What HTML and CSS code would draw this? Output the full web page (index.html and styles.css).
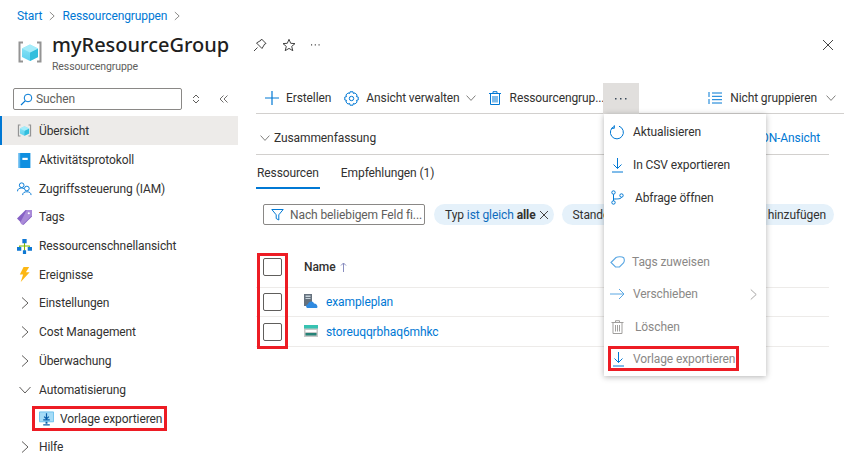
FILE: index.html
```html
<!DOCTYPE html>
<html lang="de">
<head>
  <meta charset="UTF-8">
  <title>myResourceGroup</title>
  <link rel="stylesheet" href="styles.css">
</head>
<body>
  <svg class="defs" width="0" height="0">
    <defs>
      <linearGradient id="cubeTop" x1="0" y1="0" x2="0" y2="1">
        <stop offset="0" stop-color="#8fe6f7"/><stop offset="1" stop-color="#5ed0ee"/>
      </linearGradient>
      <symbol id="rg" viewBox="0 0 26 24">
        <path d="M6 2.500H2.500V21.500H6" fill="none" stroke="#949494" stroke-width="2"/>
        <path d="M20 2.500H23.500V21.500H20" fill="none" stroke="#949494" stroke-width="2"/>
        <path d="M13 4.500L21 8.500V17L13 21L5 17V8.500Z" fill="url(#cubeTop)"/>
        <path d="M13 12.500L21 8.500V17L13 21Z" fill="#32bedd"/>
        <path d="M13 12.500L5 8.500L13 4.500L21 8.500Z" fill="#a5ecfa"/>
      </symbol>
      <symbol id="chev-right" viewBox="0 0 10 14">
        <path d="M2 1.500L8 7L2 12.500" fill="none" stroke="#605e5c" stroke-width="1"/>
      </symbol>
      <symbol id="chev-down" viewBox="0 0 14 10">
        <path d="M1.500 2L7 8L12.500 2" fill="none" stroke="#605e5c" stroke-width="1"/>
      </symbol>
      <symbol id="trash" viewBox="0 0 12 14">
        <path d="M1.500 3V13.500H10.500V3M0 2.500H12M4 2.500V.7H8V2.500M4 5V11.500M6 5V11.500M8 5V11.500" fill="none" stroke="currentColor" stroke-width="1"/>
      </symbol>
      <symbol id="down" viewBox="0 0 14 16">
        <path d="M7 1V11.500M3 7.500L7 11.500L11 7.500M1.500 15H12.500" fill="none" stroke="#0078d4" stroke-width="1"/>
      </symbol>
      <symbol id="dots" viewBox="0 0 12 2">
        <path d="M0 0H1.500V1.500H0ZM5 0H6.500V1.500H5ZM10 0H11.500V1.500H10Z" fill="currentColor"/>
      </symbol>
    </defs>
  </svg>

  <nav class="crumbs">
    <a>Start</a>
    <svg class="crumb-sep"><use href="#chev-right"/></svg>
    <a>Ressourcengruppen</a>
    <svg class="crumb-sep"><use href="#chev-right"/></svg>
  </nav>

  <header class="head">
    <svg class="head-icon"><use href="#rg"/></svg>
    <div class="head-text">
      <h1>myResourceGroup</h1>
      <div class="head-sub">Ressourcengruppe</div>
    </div>
    <div class="head-actions">
      <svg width="14" height="14" viewBox="0 0 14 14"><path d="M1 13L4.500 9.500M8.500 1L13 5.500L11.700 6L9 10.500L3.500 5L8 2.300Z" fill="none" stroke="#444" stroke-width="1"/></svg>
      <svg width="14" height="14" viewBox="0 0 14 14"><path d="M7 1.300L8.700 5.300L13 5.600L9.700 8.400L10.800 12.700L7 10.400L3.200 12.700L4.300 8.400L1 5.600L5.300 5.300Z" fill="none" stroke="#444" stroke-width="1"/></svg>
      <svg class="head-dots"><use href="#dots"/></svg>
    </div>
    <svg class="head-close" width="12" height="12" viewBox="0 0 12 12"><path d="M1 1L11 11M11 1L1 11" stroke="#444" stroke-width="1"/></svg>
  </header>

  <div class="page">
    <aside class="side">
      <div class="side-tools">
        <div class="search">
          <svg width="13" height="13" viewBox="0 0 13 13"><circle cx="8" cy="5" r="3.800" fill="none" stroke="#0078d4"/><path d="M5.200 7.800L1 12" stroke="#0078d4" stroke-width="1.200"/></svg>
          <span>Suchen</span>
        </div>
        <svg class="sort" width="8" height="10" viewBox="0 0 8 10"><path d="M1 4L4 1L7 4M1 6L4 9L7 6" fill="none" stroke="#605e5c"/></svg>
        <svg class="collapse" width="9" height="8" viewBox="0 0 9 8"><path d="M4.500 .5L1 4L4.500 7.500M8.500 .5L5 4L8.500 7.500" fill="none" stroke="#605e5c" stroke-width=".9"/></svg>
      </div>
      <ul class="nav">
        <li class="nav-item selected">
          <svg class="nav-icon"><use href="#rg"/></svg>Übersicht
        </li>
        <li class="nav-item">
          <svg class="nav-icon" viewBox="0 0 14 14"><path d="M1.500 0H12.500V14H1.500Z" fill="#0f8fe0"/><path d="M1.500 0H3V14H1.500Z" fill="#5fb8f0"/><path d="M5 4.500H10V6.500H5Z" fill="#fff"/></svg>Aktivitätsprotokoll
        </li>
        <li class="nav-item">
          <svg class="nav-icon" viewBox="0 0 16 14"><circle cx="5" cy="3.500" r="2.500" fill="none" stroke="#0078d4"/><path d="M.5 10C.5 7.500 2.500 6.500 5 6.500C6 6.500 7 6.700 7.500 7.200" fill="none" stroke="#0078d4"/><circle cx="10.500" cy="7" r="2.500" fill="none" stroke="#0078d4"/><path d="M6 14C6 11.500 8 10.500 10.500 10.500C13 10.500 15 11.500 15 14" fill="none" stroke="#0078d4"/></svg>Zugriffssteuerung (IAM)
        </li>
        <li class="nav-item">
          <svg class="nav-icon" viewBox="0 0 14 14"><path d="M8 0H14V6L6 14L0 8Z" fill="#8661c5"/><path d="M9 0H14V5L5 14L3 12Z" fill="#a98ad8"/><circle cx="11" cy="3" r="1" fill="#fff"/></svg>Tags
        </li>
        <li class="nav-item">
          <svg class="nav-icon" viewBox="0 0 14 14"><path d="M7 3V11M2.500 8V6.500H11.500V8" fill="none" stroke="#7fba00"/><path d="M5 0H9V4H5ZM0 7.500H4V11H0ZM10 7.500H14V11H10ZM5.500 10.500H8.500V14H5.500Z" fill="#0f78d4"/></svg>Ressourcenschnellansicht
        </li>
        <li class="nav-item">
          <svg class="nav-icon" viewBox="0 0 14 16"><path d="M6 0H12L8.500 5.500H12.500L3 16L5.500 8H2Z" fill="#fcb714"/></svg>Ereignisse
        </li>
        <li class="nav-item"><svg class="nav-chev"><use href="#chev-right"/></svg>Einstellungen</li>
        <li class="nav-item"><svg class="nav-chev"><use href="#chev-right"/></svg>Cost Management</li>
        <li class="nav-item"><svg class="nav-chev"><use href="#chev-right"/></svg>Überwachung</li>
        <li class="nav-item"><svg class="nav-chev-down"><use href="#chev-down"/></svg>Automatisierung</li>
        <li class="nav-item nav-child">
          <div class="nav-mark">
            <svg class="nav-icon" viewBox="0 0 16 15"><path d="M.5 .5H15.500V11H.5Z" fill="#a5dcf7" stroke="#6cc0ec"/><path d="M8 2V7.500M5.500 5.500L8 8L10.500 5.500M4.500 9H11.500" fill="none" stroke="#0a5ea8" stroke-width="1.300"/><path d="M7 11H9V13H7ZM4.500 13.500H11.500V15H4.500Z" fill="#0a5ea8"/></svg>Vorlage exportieren
          </div>
        </li>
        <li class="nav-item"><svg class="nav-chev"><use href="#chev-right"/></svg>Hilfe</li>
      </ul>
    </aside>

    <main class="main">
      <div class="cmdbar">
        <div class="cmd cmd-new">
          <svg width="14" height="14" viewBox="0 0 14 14"><path d="M7 0V14M0 7H14" stroke="#0078d4" stroke-width="1.200"/></svg>Erstellen
        </div>
        <div class="cmd cmd-view">
          <svg width="15" height="15" viewBox="0 0 15 15"><circle cx="7.500" cy="7.500" r="2.200" fill="none" stroke="#0078d4"/><path d="M6 .8H9L9.400 2.500L11 1.900L13.100 4L12.400 5.600L14.200 6V9L12.400 9.400L13.100 11L11 13.100L9.400 12.400L9 14.200H6L5.600 12.400L4 13.100L1.900 11L2.600 9.400L.8 9V6L2.600 5.600L1.900 4L4 1.900L5.600 2.500Z" fill="none" stroke="#0078d4"/></svg>Ansicht verwalten
          <svg class="cmd-chev"><use href="#chev-down"/></svg>
        </div>
        <div class="cmd cmd-del">
          <svg class="icon-trash"><use href="#trash"/></svg>Ressourcengrup...
        </div>
        <div class="cmd-more"><svg class="more-dots"><use href="#dots"/></svg></div>
        <div class="cmd cmd-group">
          <svg width="14" height="12" viewBox="0 0 14 12"><path d="M4 1H14M4 4.300H14M4 7.700H14M4 11H14M1 0V5M1 7V12" stroke="#0078d4" stroke-width="1"/></svg>Nicht gruppieren
          <svg class="cmd-chev"><use href="#chev-down"/></svg>
        </div>
      </div>

      <div class="content">
        <div class="summary">
          <svg class="summary-chev"><use href="#chev-down"/></svg>
          <span>Zusammenfassung</span>
          <a class="json">JSON-Ansicht</a>
        </div>

        <div class="tabs">
          <span class="tab active">Ressourcen</span>
          <span class="tab">Empfehlungen (1)</span>
        </div>

        <div class="filters">
          <div class="filter-input">
            <svg width="13" height="13" viewBox="0 0 13 13"><path d="M.8 1.500H12.200L7.800 6.800V12L5.200 10.500V6.800Z" fill="none" stroke="#0078d4"/></svg>
            <span>Nach beliebigem Feld fi...</span>
          </div>
          <div class="chip">Typ <em>ist gleich</em> <b>alle</b>
            <svg width="10" height="10" viewBox="0 0 10 10"><path d="M1 1L9 9M9 1L1 9" stroke="#444"/></svg>
          </div>
          <div class="chip chip-wide">Standort</div>
          <div class="chip chip-add">hinzufügen</div>
        </div>

        <div class="table">
          <div class="table-mark"></div>
          <div class="row row-head">
            <span class="check"></span>
            <span class="col-name">Name</span>
            <svg class="sort-up" width="7" height="10" viewBox="0 0 7 10"><path d="M3.500 10V1M1 3.500L3.500 1L6 3.500" fill="none" stroke="#8a8ec0"/></svg>
          </div>
          <div class="row row-one">
            <span class="check"></span>
            <svg class="res-icon" viewBox="0 0 14 14"><path d="M0 0H8V12H0Z" fill="#66727e"/><path d="M1.500 1.500H6.500V3H1.500ZM1.500 4H6.500V5H1.500Z" fill="#c8d4dc"/><path d="M4 14C1.500 14 1.500 10.500 4 10.300C4.500 7 9 6.500 10 9.500C13 9.300 15 14 12 14Z" fill="#2f8ae0"/></svg>
            <a>exampleplan</a>
          </div>
          <div class="row row-two">
            <span class="check"></span>
            <svg class="res-icon" viewBox="0 0 14 12"><path d="M0 0H14V12H0Z" fill="#c8c8c8"/><path d="M0 0H14V3.500H0Z" fill="#37c2b1"/><path d="M1.500 5H12.500V7H1.500Z" fill="#fff"/><path d="M1.500 8H12.500V10.500H1.500Z" fill="#258277"/></svg>
            <a>storeuqqrbhaq6mhkc</a>
          </div>
        </div>
      </div>
    </main>
  </div>

  <div class="menu">
    <div class="menu-item">
      <svg width="15" height="15" viewBox="0 0 15 15"><path d="M4.500 1.300A6.500 6.500 0 1 0 9 1.200M4.300 .3V3.300H1.500" fill="none" stroke="#0078d4"/></svg>
      <span>Aktualisieren</span>
    </div>
    <div class="menu-item">
      <svg class="icon-down"><use href="#down"/></svg>
      <span>In CSV exportieren</span>
    </div>
    <div class="menu-item item-wide">
      <svg width="13" height="15" viewBox="0 0 13 15"><circle cx="2.500" cy="2.500" r="1.700" fill="none" stroke="#0078d4"/><circle cx="2.500" cy="12.500" r="1.700" fill="none" stroke="#0078d4"/><circle cx="10.500" cy="5.500" r="1.700" fill="none" stroke="#0078d4"/><path d="M2.500 4.200V10.800M2.500 9C6 9 10.500 9 10.500 7.200" fill="none" stroke="#0078d4"/></svg>
      <span>Abfrage öffnen</span>
    </div>
    <div class="menu-gap"></div>
    <div class="menu-item off item-tag">
      <svg width="15" height="12" viewBox="0 0 15 12"><path d="M1 6.500L6 1.500C8 .5 12 .5 13.700 1.800C14.500 3.500 14.500 5.500 13.500 7L9.500 11H5.500Z" fill="none" stroke="#5aa7e3" stroke-width="1.100"/></svg>
      <span>Tags zuweisen</span>
    </div>
    <div class="menu-item off">
      <svg width="15" height="12" viewBox="0 0 15 12"><path d="M0 6H14M9 1L14 6L9 11" fill="none" stroke="#5aa7e3"/></svg>
      <span>Verschieben</span>
      <svg class="menu-chev"><use href="#chev-right"/></svg>
    </div>
    <div class="menu-item off item-wide">
      <svg class="icon-trash-off"><use href="#trash"/></svg>
      <span>Löschen</span>
    </div>
    <div class="menu-item off menu-mark">
      <svg class="icon-down"><use href="#down"/></svg>
      <span>Vorlage exportieren</span>
    </div>
  </div>
</body>
</html>
```

FILE: styles.css
```css
* {
  box-sizing: border-box;
}
html, body {
  margin: 0;
  height: 459px;
  overflow: hidden;
}
body {
  position: relative;
  background: #fff;
  color: #323130;
  font-family: Roboto, "Noto Sans", sans-serif;
  font-size: 12px;
  letter-spacing: -0.1px;
}
a {
  color: #0078d4;
  text-decoration: none;
}
em {
  font-style: normal;
  color: #0f6cbd;
}
.defs {
  position: absolute;
}

/* breadcrumb + title */
.crumbs {
  display: flex;
  align-items: center;
  height: 31px;
  padding-left: 17px;
  gap: 6px;
}
.crumb-sep {
  width: 8px;
  height: 10px;
}
.head {
  display: flex;
  align-items: flex-start;
  height: 52px;
  padding-left: 17px;
}
.head-icon {
  width: 26px;
  height: 24px;
  margin-top: 9px;
}
.head-text {
  margin-left: 9px;
  width: 200px;
}
h1 {
  margin: 0;
  font-family: "Noto Sans", sans-serif;
  font-size: 20px;
  font-weight: 500;
  line-height: 28px;
  letter-spacing: 0;
  color: #1f1f1f;
}
.head-sub {
  margin-top: 1px;
  font-size: 10.500px;
  line-height: 14px;
  color: #605e5c;
}
.head-actions {
  display: flex;
  align-items: center;
  gap: 15px;
  height: 28px;
  margin-left: 1px;
}
.head-dots {
  width: 9px;
  height: 2px;
  color: #444;
}
.head-close {
  margin: 8px 10px 0 auto;
}

.page {
  display: flex;
  height: 376px;
}

/* left menu */
.side {
  width: 238px;
  flex: none;
}
.side-tools {
  display: flex;
  align-items: center;
  height: 33px;
  padding: 5px 0 6px 13px;
}
.search {
  display: flex;
  align-items: center;
  gap: 3px;
  width: 169px;
  height: 22px;
  padding-left: 6px;
  border: 1px solid #8a8886;
  border-radius: 2px;
  color: #605e5c;
}
.sort {
  margin-left: 10px;
}
.collapse {
  margin-left: 19px;
}
.nav {
  list-style: none;
  margin: 0;
  padding: 0;
}
.nav-item {
  display: flex;
  align-items: center;
  height: 28.700px;
  padding: 2px 0 0 17px;
  white-space: nowrap;
}
.nav-item.selected {
  background: #edebe9;
  border-left: 2px solid #0078d4;
  padding: 1px 0 0 15px;
}
.nav-icon {
  width: 15px;
  height: 15px;
  margin-right: 7px;
  flex: none;
}
.nav-chev {
  width: 10px;
  height: 14px;
  margin: 0 9px 0 3px;
}
.nav-chev-down {
  width: 14px;
  height: 10px;
  margin: 0 7px 0 1px;
}
.nav-child {
  padding: 3px 0 0 32px;
}
.nav-mark {
  display: flex;
  align-items: center;
  width: 135px;
  height: 25px;
  padding-left: 4px;
  border: 3px solid #ed1c24;
  white-space: nowrap;
}
.nav-mark .nav-icon {
  margin-right: 6px;
}

/* right side */
.main {
  flex: 1;
  margin-left: 18px;
  min-width: 0;
}
.cmdbar {
  display: flex;
  align-items: center;
  height: 31px;
  border-bottom: 1px solid #d2d0ce;
}
.cmd {
  display: flex;
  align-items: center;
  white-space: nowrap;
}
.cmd-new {
  gap: 7px;
  margin-left: 9px;
}
.cmd-view {
  gap: 7px;
  margin-left: 13px;
}
.cmd-view .cmd-chev {
  margin-left: -2px;
}
.cmd-del {
  gap: 9px;
  margin-left: 12px;
}
.cmd-chev {
  width: 12px;
  height: 8px;
}
.icon-trash {
  width: 12px;
  height: 14px;
  color: #0078d4;
}
.cmd-more {
  display: flex;
  align-items: center;
  justify-content: center;
  position: absolute;
  left: 603px;
  top: 83px;
  width: 36px;
  height: 31px;
  background: #e1dfdd;
}
.more-dots {
  width: 12px;
  height: 2px;
  color: #3b4a5a;
}
.cmd-group {
  gap: 8px;
  margin-left: auto;
  margin-right: 7px;
}

.content {
  margin-right: 15px;
}
.summary {
  display: flex;
  align-items: center;
  height: 41px;
  padding-top: 8px;
  border-bottom: 1px solid #d2d0ce;
  padding-left: 3px;
}
.summary-chev {
  width: 12px;
  height: 8px;
  margin-right: 3px;
}
.json {
  margin-left: auto;
  margin-right: 9px;
}
.tabs {
  display: flex;
  gap: 20px;
  height: 34px;
  padding-top: 8px;
}
.tab {
  height: 26px;
  padding: 3px 1px 0;
}
.tab.active {
  border-bottom: 2px solid #0078d4;
}

.filters {
  display: flex;
  align-items: center;
  margin-top: 15px;
  margin-right: -5px;
  padding-left: 7px;
  white-space: nowrap;
}
.filter-input {
  display: flex;
  align-items: center;
  gap: 6px;
  width: 162px;
  height: 21px;
  padding-left: 7px;
  border: 1px solid #8a8886;
  border-radius: 2px;
  color: #605e5c;
}
.chip {
  display: flex;
  align-items: center;
  gap: 3px;
  height: 21px;
  margin-left: 9px;
  padding: 0 5px 0 11px;
  border-radius: 11px;
  background: #e5f1fa;
}
.chip-wide {
  margin-left: 8px;
  width: 180px;
}
.chip-add {
  flex: 1;
  margin-left: 8px;
  justify-content: flex-end;
  padding: 0 8px 0 0;
}

.table {
  position: relative;
  margin-top: 14px;
}
/* red annotation round the checkboxes */
.table-mark {
  position: absolute;
  left: 1px;
  top: 14px;
  width: 31px;
  height: 96px;
  border: 3px solid #ed1c24;
}
.row {
  display: flex;
  align-items: center;
  padding-left: 7px;
  border-bottom: 1px solid #edebe9;
}
.row-head {
  height: 49px;
  padding-top: 7px;
}
.row-one {
  height: 29px;
}
.row-two {
  height: 30px;
}
.check {
  width: 19px;
  height: 18px;
  border: 1px solid #605e5c;
  border-radius: 2px;
  flex: none;
}
.col-name {
  margin-left: 22px;
  font-weight: 500;
}
.sort-up {
  margin-left: 5px;
}
.res-icon {
  width: 14px;
  height: 14px;
  margin: 0 8px 2px 22px;
}

/* dropdown from the more button */
.menu {
  position: absolute;
  left: 604px;
  top: 114px;
  width: 162px;
  height: 262px;
  padding-top: 2px;
  background: #fff;
  box-shadow: 0 1px 6px rgba(0, 0, 0, 0.3);
}
.menu-item {
  display: flex;
  align-items: center;
  gap: 8px;
  height: 32.700px;
  padding-left: 6px;
  white-space: nowrap;
}
.menu-item > svg:first-child {
  width: 15px;
  flex: none;
}
.item-wide {
  gap: 10px;
}
.item-tag {
  gap: 7px;
  height: 32px;
}
.menu-gap {
  height: 32px;
}
.off span {
  color: #8a8886;
}
.icon-down {
  width: 14px;
  height: 16px;
}
.icon-trash-off {
  height: 14px;
  color: #a19f9d;
}
.menu-chev {
  width: 9px;
  height: 13px;
  margin-left: auto;
  margin-right: 8px;
  opacity: 0.6;
}
.menu-mark {
  position: absolute;
  left: 4px;
  top: 232px;
  width: 131px;
  height: 25px;
  padding-left: 0;
  border: 3px solid #ed1c24;
  gap: 7px;
}
```
